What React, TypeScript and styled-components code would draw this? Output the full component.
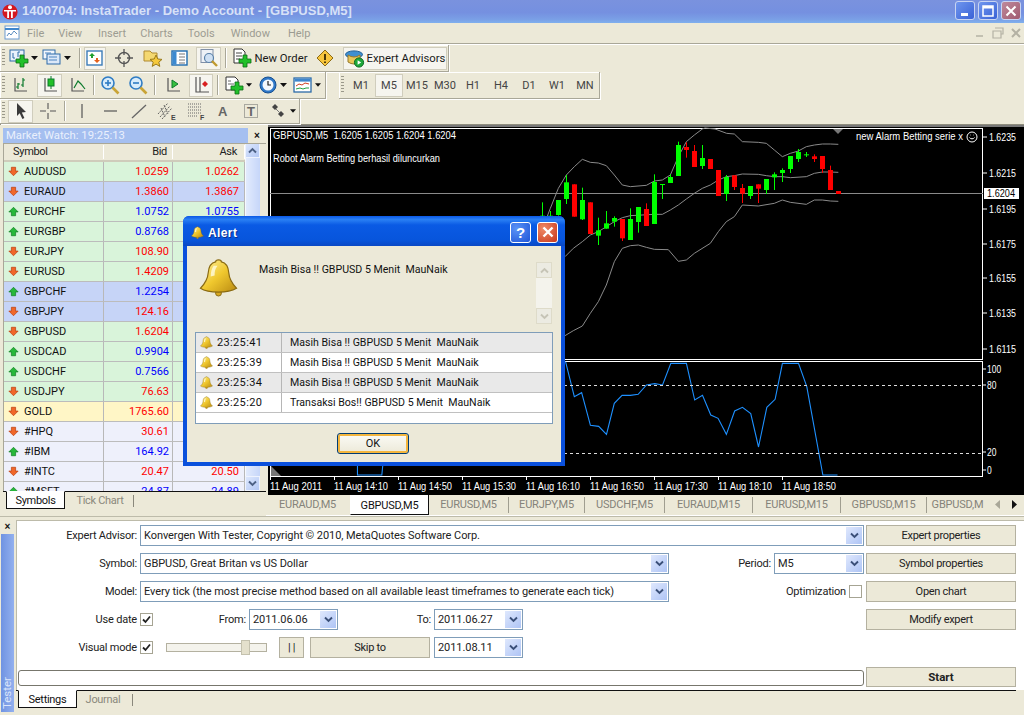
import React from "react";
import styled, { createGlobalStyle } from "styled-components";

const FONT = `Roboto, "Liberation Sans", Arial, sans-serif`;
const HEAD = `"Liberation Sans", Arial, sans-serif`;

const Global = createGlobalStyle`
  html, body { margin: 0; padding: 0; background: #ece9d8; overflow: hidden; }
  #root { width: 1024px; height: 715px; }
`;

const Window = styled.div`
  position: relative; width: 1024px; height: 715px; overflow: hidden;
  display: flex; flex-direction: column; background: #ece9d8;
  font: 11px ${FONT}; color: #222;
`;

/* ---------- title + menu ---------- */
const TitleBar = styled.div`
  height: 23px; flex: none; display: flex; align-items: center; padding: 0 3px 0 2px;
  background: linear-gradient(180deg, #7a92de 0%, #7590e0 55%, #7aa0e6 85%, #7fb0ee 100%);
`;
const TitleText = styled.div`
  flex: 1; font: bold 13px ${HEAD}; color: #d6e1f7; white-space: nowrap; margin: -2px 0 0 4px; letter-spacing: .02px;
`;
const CaptionBtn = styled.div<{ $bg: string }>`
  width: 20px; height: 19px; border-radius: 3px; border: 1px solid #c8d4f2; background: ${p => p.$bg};
  display: flex; align-items: center; justify-content: center; margin-left: 3px; margin-top: -2px; box-sizing: border-box;
`;
const MenuBar = styled.div`
  height: 20px; flex: none; display: flex; align-items: center; padding-left: 4px; color: #9c9c92;
  font-size: 11px; position: relative;
`;
const MenuItem = styled.span<{ $x: number }>`
  margin-left: ${p => p.$x}px;
`;
const MdiGroup = styled.div`
  margin-left: auto; display: flex; align-items: center; gap: 4px; padding-right: 1px;
`;

/* ---------- toolbars ---------- */
const Dock = styled.div`
  height: 82px; flex: none; border-top: 1px solid #a9a798; box-shadow: inset 0 1px 0 #fff; display: flex; flex-direction: column;
  padding-top: 1px; box-sizing: border-box; border-bottom: 1px solid #8f8d7e;
`;
const DockRow = styled.div<{ $h: number }>`
  height: ${p => p.$h}px; display: flex; flex: none;
`;
const Band = styled.div<{ $w: number; $ml?: number }>`
  width: ${p => p.$w}px; margin-left: ${p => p.$ml ?? 0}px; box-sizing: border-box; height: 100%;
  display: flex; align-items: center; border-right: 1px solid #a9a798; border-bottom: 1px solid #a9a798;
  box-shadow: 1px 1px 0 #fff, inset 1px 1px 0 #fff;
`;
const Grip = styled.div`
  width: 3px; height: 18px; margin: 0 3px 0 2px; flex: none;
  background: repeating-linear-gradient(180deg, #9a988a 0 1px, transparent 1px 3px);
`;
const Tool = styled.div<{ $w: number; $ml?: number; $on?: boolean }>`
  width: ${p => p.$w}px; height: 23px; margin-left: ${p => p.$ml ?? 0}px; flex: none; box-sizing: border-box;
  display: flex; align-items: center; justify-content: center; gap: 2px; white-space: nowrap;
  font-size: 11.3px; color: #1a1a1a;
  background: ${p => (p.$on ? "#f6f5ef" : "transparent")};
  border: 1px solid ${p => (p.$on ? "#d0cdbd" : "transparent")};
`;
const ToolSep = styled.div<{ $ml: number; $mr: number }>`
  width: 1px; height: 20px; background: #a9a798; box-shadow: 1px 0 0 #fff; margin: 0 ${p => p.$mr}px 0 ${p => p.$ml}px; flex: none;
`;
const Period = styled.div<{ $on?: boolean }>`
  width: 28px; height: 23px; box-sizing: border-box; display: flex; align-items: center; justify-content: center; flex: none;
  color: #444; font-size: 11px;
  background: ${p => (p.$on ? "#f6f5ef" : "transparent")};
  border: 1px solid ${p => (p.$on ? "#d0cdbd" : "transparent")};
`;
const Drop = () => (
  <svg width="7" height="4" viewBox="0 0 7 4"><path d="M0 0h7L3.5 4z" fill="#111" /></svg>
);

/* icons */
const Plus = ({ x = 7, y = 7, s = 1 }: { x?: number; y?: number; s?: number }) => (
  <path transform={`translate(${x} ${y}) scale(${s})`} d="M4 0h4v4h4v4H8v4H4V8H0V4h4z" fill="#22c02a" stroke="#0d6b14" strokeWidth=".8" />
);
const Ico = styled.svg<{ $w?: number }>`
  width: ${p => p.$w ?? 20}px; height: 20px; flex: none;
`;
const NewChartIcon = () => (
  <Ico viewBox="0 0 20 20">
    <rect x="1" y="2" width="14" height="11" fill="#e9f1fb" stroke="#2c6aa8" />
    <path d="M4 5v5M4 10h2M9 4v5M9 4h2" stroke="#2c6aa8" fill="none" />
    <Plus />
  </Ico>
);
const ProfileIcon = () => (
  <Ico viewBox="0 0 20 20">
    <rect x="1" y="2" width="12" height="9" fill="#f2f6fc" stroke="#2c6aa8" />
    <rect x="5" y="6" width="13" height="10" fill="#dce8f8" stroke="#2c6aa8" />
    <path d="M7 9h8M7 12h8M3 5h6" stroke="#4c84c0" />
  </Ico>
);
const WatchIcon = () => (
  <Ico viewBox="0 0 20 20">
    <rect x="2" y="3" width="15" height="14" fill="#fff" stroke="#3c7cb8" strokeWidth="1.4" />
    <path d="M7 5l3 3H8v2H6V8H4z" fill="#20a030" /><path d="M12 15l3-3h-2v-2h-2v2H9z" fill="#e4601c" />
  </Ico>
);
const CrossCircleIcon = () => (
  <Ico viewBox="0 0 20 20">
    <circle cx="10" cy="10" r="5.5" fill="none" stroke="#555" strokeWidth="1.4" />
    <path d="M10 1v6M10 13v6M1 10h6M13 10h6" stroke="#555" strokeWidth="1.3" />
  </Ico>
);
const FolderStarIcon = () => (
  <Ico viewBox="0 0 20 20">
    <path d="M1 3h6l2 2h5v8H1z" fill="#f4d870" stroke="#b08a30" />
    <path d="M13 7l1.8 4 4.2.4-3.2 2.8 1 4.2-3.8-2.3-3.8 2.3 1-4.2L7 11.4l4.2-.4z" fill="#f6c93a" stroke="#9a7a1a" />
  </Ico>
);
const NavigatorIcon = () => (
  <Ico viewBox="0 0 20 20">
    <rect x="2" y="3" width="15" height="14" fill="#fff" stroke="#1f6bb0" strokeWidth="1.4" />
    <rect x="2.5" y="3.5" width="4" height="13" fill="#3c8ad0" />
    <path d="M9 6h6M9 9h6M9 12h6M9 15h6" stroke="#777" />
  </Ico>
);
const TesterIcon = () => (
  <Ico viewBox="0 0 20 20">
    <rect x="2" y="1.5" width="12" height="13" fill="#eef1f6" stroke="#8090a8" />
    <circle cx="10" cy="10" r="4.5" fill="#cfe0f3" stroke="#5a80a8" strokeWidth="1.2" />
    <path d="M13 13l5 5" stroke="#c09a30" strokeWidth="2.4" />
  </Ico>
);
const OrderIcon = () => (
  <Ico viewBox="0 0 20 20">
    <path d="M2 1h8l3 3v11H2z" fill="#fff" stroke="#333" />
    <path d="M4 5h6M4 8h6M4 11h4" stroke="#444" />
    <Plus x={7} y={7} />
  </Ico>
);
const AlertDiamondIcon = () => (
  <Ico viewBox="0 0 20 20">
    <path d="M10 2l8 8-8 8-8-8z" fill="#f7c53c" stroke="#8c6a12" />
    <path d="M10 6v6M10 13.5v1.6" stroke="#3a2a00" strokeWidth="1.8" />
  </Ico>
);
const EAIcon = () => (
  <Ico viewBox="0 0 20 20">
    <ellipse cx="9" cy="6.5" rx="8.5" ry="3.6" fill="#3f8fd0" stroke="#1f5f98" />
    <path d="M3 7q6 4 12 0v7q-6 4-12 0z" fill="#e8c65a" stroke="#97792a" />
    <circle cx="14" cy="14.5" r="4.6" fill="#1ea83a" stroke="#0c6a22" />
    <path d="M12.6 12.2l3.6 2.3-3.6 2.3z" fill="#fff" />
  </Ico>
);
const AxisPath = "M5 3v13h12";
const BarsIcon = () => (
  <Ico viewBox="0 0 20 20"><path d={AxisPath} fill="none" stroke="#555" strokeWidth="1.2" /><path d="M8 8v6M6 12h2M8 9h2M13 3v9M11 10h2M13 5h2" stroke="#0c7a2c" fill="none" strokeWidth="1.2" /></Ico>
);
const CandlesIcon = () => (
  <Ico viewBox="0 0 20 20"><path d={AxisPath} fill="none" stroke="#555" strokeWidth="1.2" /><path d="M11 1v13" stroke="#0c7a2c" /><rect x="8" y="4" width="6" height="7" fill="#22c02a" stroke="#0c7a2c" /></Ico>
);
const LineChartIcon = () => (
  <Ico viewBox="0 0 20 20"><path d={AxisPath} fill="none" stroke="#555" strokeWidth="1.2" /><path d="M7 13l4-7 3 3 4 5" fill="none" stroke="#0c7a2c" strokeWidth="1.2" /></Ico>
);
const ZoomIcon = ({ plus }: { plus?: boolean }) => (
  <Ico viewBox="0 0 20 20">
    <circle cx="8" cy="8" r="6" fill="#d8ecfb" stroke="#2f7cc4" strokeWidth="1.6" />
    <path d="M5 8h6" stroke="#2f7cc4" strokeWidth="1.6" />
    {plus && <path d="M8 5v6" stroke="#2f7cc4" strokeWidth="1.6" />}
    <path d="M12.5 12.5l6 6" stroke="#c9a437" strokeWidth="2.6" />
  </Ico>
);
const ScrollIcon = () => (
  <Ico viewBox="0 0 20 20"><path d={AxisPath} fill="none" stroke="#555" strokeWidth="1.2" /><path d="M9 5l6 4-6 4z" fill="#38c040" stroke="#0c7a2c" /></Ico>
);
const ShiftIcon = () => (
  <Ico viewBox="0 0 20 20"><path d="M5 2v15h13M9 2v15" fill="none" stroke="#555" strokeWidth="1.2" /><path d="M14 6l3 3-3 3-3-3z" fill="#d82020" /></Ico>
);
const IndicatorIcon = () => (
  <Ico viewBox="0 0 20 20">
    <path d="M2 2h9l3 3v10H2z" fill="#fff" stroke="#333" />
    <path d="M4 6h3M4 9h6" stroke="#666" />
    <Plus x={7} y={7} />
  </Ico>
);
const ClockIcon = () => (
  <Ico viewBox="0 0 20 20">
    <circle cx="10" cy="10" r="8" fill="#2f78c8" stroke="#174f90" />
    <circle cx="10" cy="10" r="5.5" fill="#f4f8fd" />
    <path d="M10 6v4h3" fill="none" stroke="#222" strokeWidth="1.2" />
  </Ico>
);
const TemplateIcon = () => (
  <Ico viewBox="0 0 20 20">
    <rect x="1" y="3" width="17" height="14" fill="#fff" stroke="#2c6aa8" strokeWidth="1.3" />
    <rect x="1.6" y="3.6" width="16" height="3" fill="#3f86cc" />
    <path d="M3 11l3-2 3 1 3-2 4 1" fill="none" stroke="#d04020" />
    <path d="M3 14l4-1 3 1 3-1 3 0" fill="none" stroke="#20a040" />
  </Ico>
);
const CursorIcon = () => (
  <Ico viewBox="0 0 20 20"><path d="M6 2l9 9-4.2.4 2.6 5.6-2 1-2.7-5.7L6 15z" fill="#3a3a3a" /></Ico>
);
const PlainCrossIcon = () => (
  <Ico viewBox="0 0 20 20"><path d="M10 2v6M10 12v6M2 10h6M12 10h6" stroke="#555" strokeWidth="1.1" /></Ico>
);
const VLineIcon = () => <Ico viewBox="0 0 20 20"><path d="M10 3v14" stroke="#555" strokeWidth="1.2" /></Ico>;
const HLineIcon = () => <Ico viewBox="0 0 20 20"><path d="M3 10h13" stroke="#555" strokeWidth="1.2" /></Ico>;
const TrendIcon = () => <Ico viewBox="0 0 20 20"><path d="M3 17L17 4" stroke="#666" strokeWidth="1.3" /></Ico>;
const IconLetter = styled.text`
  font: bold 7px ${HEAD}; fill: #444;
`;
const ChannelIcon = () => (
  <Ico viewBox="0 0 20 20"><path d="M1 13L11 2M3 16L13 5M5 18L15 7M4 7l4 9M7 4l4 9" stroke="#555" strokeWidth=".9" strokeDasharray="2 1" /><IconLetter x="14" y="19">E</IconLetter></Ico>
);
const FiboIcon = () => (
  <Ico viewBox="0 0 20 20"><path d="M2 3h13M2 6h13M2 9h13M2 12h13M2 15h10" stroke="#666" strokeDasharray="1 1" /><IconLetter x="14" y="19">F</IconLetter></Ico>
);
const LetterA = styled.text`
  font: bold 13px ${HEAD}; fill: #666;
`;
const LetterIcon = () => <Ico viewBox="0 0 20 20"><LetterA x="5" y="15">A</LetterA></Ico>;
const TextBoxIcon = () => (
  <Ico viewBox="0 0 20 20"><rect x="3.5" y="3.5" width="13" height="13" fill="none" stroke="#666" strokeDasharray="1 1" /><LetterA x="6" y="15">T</LetterA></Ico>
);
const ArrowsIcon = () => (
  <Ico viewBox="0 0 20 20"><path d="M7 3l3 3-3 3-3-3z" fill="#444" /><path d="M13 10l3 3-3 3-3-3z" fill="#444" /><path d="M8 8l4 4" stroke="#777" /></Ico>
);
const AppLogo = () => (
  <svg width="16" height="18" viewBox="0 0 16 18">
    <circle cx="8" cy="9" r="7.6" fill="#d41820" />
    <circle cx="8" cy="4.2" r="2" fill="#fff" />
    <path d="M2 7h12v1.6h-3.2V15H9V8.6H7V15H5.200V8.600H2z" fill="#fff" />
  </svg>
);
const MenuLogo = () => (
  <svg width="16" height="18" viewBox="0 0 16 18">
    <rect x="1" y="2" width="14" height="13" fill="#fff" stroke="#6c9cd0" />
    <path d="M1 5h14" stroke="#3f86cc" strokeWidth="2" /><path d="M3 12l2-3 2 2 3-4 3 3" fill="none" stroke="#5a8dc0" />
  </svg>
);

/* ---------- workspace ---------- */
const Workspace = styled.div`
  height: 391px; flex: none; display: flex; width: 1024px;
`;
const Watch = styled.div`
  width: 266px; flex: none; display: flex; flex-direction: column; box-sizing: border-box; padding: 2px 0 5px 3px;
`;
const WatchHead = styled.div`
  height: 16px; flex: none; display: flex; align-items: center;
`;
const WatchTitle = styled.div`
  width: 245px; height: 15px; line-height: 15px; background: #a5bff0; color: #eaf0fc; padding-left: 3px; box-sizing: border-box;
  font-size: 11.3px;
`;
const PanelClose = styled.div`
  width: 18px; text-align: center; font: bold 10px ${HEAD}; color: #111;
`;
const WatchBody = styled.div`
  flex: 1; display: flex; min-height: 0; overflow: hidden; position: relative;
  border-left: 1px solid #a9a798; border-top: 1px solid #a9a798;
`;
const WatchList = styled.div`
  width: 241px; flex: none;
`;
const grid = "grid-template-columns: 100px 69px 72px;";
const WatchHeader = styled.div`
  display: grid; ${grid} height: 18px; box-sizing: border-box; align-items: center; border-bottom: 2px solid #cfccbb; font-size: 11px; letter-spacing: -.3px; background: #ece9d8; color: #222;
`;
const HeadCell = styled.div<{ $pr?: number }>`
  padding: 0 ${p => p.$pr ?? 0}px 0 ${p => (p.$pr ? 0 : 9)}px; text-align: ${p => (p.$pr ? "right" : "left")};
  border-right: 1px solid #fff; height: 14px; line-height: 14px;
`;
const RowTint: Record<string, string> = { g: "#d9f4da", b: "#c6d4f7", y: "#fff6c6", l: "#eef0fb" };
const WatchRow = styled.div<{ $t: string }>`
  display: grid; ${grid} height: 20px; box-sizing: border-box; background: ${p => RowTint[p.$t]}; border-bottom: 1px solid #bcbcbc; align-items: center; font-size: 11px;
`;
const SymCell = styled.div`
  display: flex; align-items: center; gap: 5px; padding-left: 4px; height: 19px; border-right: 1px solid #b8b8b8; color: #111;
`;
const NumCell = styled.div<{ $up: boolean; $pr: number }>`
  text-align: right; padding-right: ${p => p.$pr}px; height: 19px; line-height: 19px; color: ${p => (p.$up ? "#0000ff" : "#ff0000")}; border-right: 1px solid #b8b8b8;
`;
const TickArrow = ({ up }: { up: boolean }) => (
  <svg width="11" height="11" viewBox="0 0 13 12">
    {up
      ? <path d="M6.500 1l5.500 5.500H9V11H4V6.500H1z" fill="#27b83a" stroke="#0d7a20" strokeWidth=".8" />
      : <path d="M6.500 11L1 5.500h3V1h5v4.500h3z" fill="#f0672a" stroke="#b83a0c" strokeWidth=".8" />}
  </svg>
);
const VScroll = styled.div`
  width: 15px; flex: none; display: flex; flex-direction: column; margin-top: -1px; background: #f3f5fc;
`;
const ScrollBtn = styled.div`
  height: 15px; flex: none; box-sizing: border-box; border: 1px solid #eef3fe; background: linear-gradient(135deg, #dce7fd, #b4c8f4);
  display: flex; align-items: center; justify-content: center;
`;
const ScrollThumb = styled.div`
  flex: 1; background: linear-gradient(90deg, #e2ebfd, #c6d6f9); border-left: 1px solid #f6f9ff;
`;
const Chev = ({ up, c = "#4d6185" }: { up?: boolean; c?: string }) => (
  <svg width="9" height="7" viewBox="0 0 9 7">
    <path d={up ? "M1 5.500l3.500-3.500 3.500 3.500" : "M1 1.500l3.500 3.500 3.500-3.500"} fill="none" stroke={c} strokeWidth="1.9" />
  </svg>
);
const Tabs = styled.div<{ $h: number; $pl: number }>`
  height: ${p => p.$h}px; flex: none; display: flex; align-items: flex-start; padding-left: ${p => p.$pl}px; border-top: 1px solid #111; box-sizing: border-box; position: relative; background: #ece9d8;
`;
const PanelTab = styled.div<{ $active?: boolean; $w: number; $ml?: number }>`
  width: ${p => p.$w}px; height: 18px; line-height: 17px; text-align: center; box-sizing: border-box; margin-left: ${p => p.$ml ?? 0}px; margin-top: -1px;
  font-size: 11px; letter-spacing: -.3px; color: ${p => (p.$active ? "#111" : "#8a887c")};
  background: ${p => (p.$active ? "#fff" : "transparent")};
  border: ${p => (p.$active ? "1px solid #111" : "none")}; border-top: 1px solid ${p => (p.$active ? "#fff" : "#111")};
  flex: none;
`;
const TabSep = styled.div<{ $ml: number }>`
  width: 1px; height: 12px; background: #8a887c; margin: 3px 0 0 ${p => p.$ml}px; flex: none;
`;

const ChartCol = styled.div`
  flex: 1; min-width: 0; display: flex; flex-direction: column; padding-left: 2px;
`;
const ChartPane = styled.div`
  height: 370px; flex: none; background: #000; border-top: 2px solid #777; box-sizing: border-box; overflow: hidden;
`;
const ChartSvg = styled.svg`
  display: block; width: 756px; height: 368px;
`;
const ChartText = styled.text`
  font: 11px ${HEAD}; fill: #fff;
`;
const ChartTabs = styled.div`
  height: 21px; flex: none; display: flex; align-items: flex-start; margin-left: -2px; font-size: 11px; letter-spacing: -.2px; border-bottom: 1px solid #fff; box-sizing: border-box;
`;
const ChartTab = styled.div<{ $w: number; $active?: boolean; $sep?: boolean }>`
  width: ${p => p.$w}px; flex: none; height: ${p => (p.$active ? 20 : 16)}px; line-height: ${p => (p.$active ? 21 : 16)}px; margin-top: ${p => (p.$active ? 0 : 2)}px; text-align: center; box-sizing: border-box;
  white-space: nowrap; overflow: hidden;
  color: ${p => (p.$active ? "#111" : "#85837a")};
  background: ${p => (p.$active ? "#fff" : "transparent")};
  border-right: 1px solid ${p => (p.$active ? "#111" : p.$sep ? "#a09e90" : "transparent")};
  border-bottom: ${p => (p.$active ? "1px solid #111" : "none")};
  border-left: ${p => (p.$active ? "1px solid #fff" : "none")};
`;
const TabNav = styled.div`
  margin-left: auto; display: flex; gap: 12px; align-items: center; height: 18px; padding-right: 7px;
`;

/* ---------- tester ---------- */
const Tester = styled.div`
  height: 199px; flex: none; display: flex; border-top: 1px solid #bdbbaa; box-sizing: border-box; padding: 3px 0 3px 0;
`;
const TesterSide = styled.div`
  width: 15px; flex: none; display: flex; flex-direction: column; align-items: center;
`;
const TesterClose = styled.div`
  height: 13px; flex: none; font: bold 10px ${HEAD}; color: #111; line-height: 13px;
`;
const TesterStrip = styled.div`
  flex: 1; width: 13px; background: linear-gradient(90deg, #6f93e2, #93b0ee); color: #dbe6fb; font-size: 11.5px;
  display: flex; flex-direction: column; justify-content: flex-end; align-items: center; margin-top: 1px;
`;
const StripLabel = styled.span`
  writing-mode: vertical-rl; transform: rotate(180deg); padding-top: 3px; line-height: 13px;
`;
const TesterMain = styled.div`
  flex: 1; min-width: 0; display: flex; flex-direction: column; margin-left: 1px;
`;
const Form = styled.div`
  background: #fff; flex: 1; display: flex; flex-direction: column; padding: 4px 8px 0 0; gap: 7px; border: 1px solid #bdbbaa; border-bottom: none; border-right: none; min-height: 0;
`;
const FormRow = styled.div`
  height: 21px; display: flex; align-items: center; flex: none;
`;
const FieldLabel = styled.div<{ $w?: number; $grow?: boolean }>`
  ${p => (p.$grow ? "flex: 1;" : `width: ${p.$w}px;`)} flex-shrink: 0; text-align: right; font-size: 11px; letter-spacing: -.2px; color: #222; white-space: nowrap;
  padding-right: 3px; box-sizing: border-box;
`;
const Combo = styled.div<{ $w?: number; $ml?: number }>`
  ${p => (p.$w ? `width: ${p.$w}px; flex: none;` : "flex: 1;")} margin-left: ${p => p.$ml ?? 0}px; height: 21px; box-sizing: border-box; border: 1px solid #7f9db9; background: #fff; display: flex; align-items: center;
  padding-left: 3px; font-size: 11px; letter-spacing: -.07px; color: #222; white-space: nowrap; min-width: 0;
`;
const ComboText = styled.span`
  flex: 1; overflow: hidden;
`;
const ComboBtn = styled.div`
  width: 16px; height: 17px; flex: none; margin-right: 1px; background: linear-gradient(135deg, #dfe8fd, #aec4f5); display: flex; align-items: center; justify-content: center;
`;
const ActionBtn = styled.div<{ $w: number; $ml?: number; $h?: number; $bold?: boolean }>`
  width: ${p => p.$w}px; height: ${p => p.$h ?? 21}px; flex: none; margin-left: ${p => p.$ml ?? 0}px; box-sizing: border-box; border: 1px solid #b4b1a0; background: #ece9d8;
  font-size: ${p => (p.$bold ? 11.5 : 11)}px; letter-spacing: ${p => (p.$bold ? 0 : -0.3)}px; font-weight: ${p => (p.$bold ? 700 : 400)}; color: #222; display: flex; align-items: center; justify-content: center;
`;
const Check = styled.div<{ $ml?: number }>`
  width: 13px; height: 13px; flex: none; margin-left: ${p => p.$ml ?? 0}px; box-sizing: border-box; border: 1px solid #a6a493; background: #fff; display: flex; align-items: center; justify-content: center;
`;
const Tick = () => (
  <svg width="9" height="9" viewBox="0 0 9 9"><path d="M1 4.500l2.500 2.500L8 1.500" fill="none" stroke="#222" strokeWidth="1.8" /></svg>
);
const Slider = styled.div<{ $ml: number }>`
  width: 101px; height: 9px; flex: none; margin-left: ${p => p.$ml}px; border: 1px solid #b4b1a0; box-sizing: border-box; position: relative; background: #f4f3ec;
`;
const SliderThumb = styled.div`
  position: absolute; left: 74px; top: -4px; width: 9px; height: 15px; background: #e4e0cc; border: 1px solid #c4c1ae; box-sizing: border-box;
`;
const ProgressRow = styled.div`
  display: flex; align-items: flex-start; height: 20px; flex: none; margin-top: 2px; padding-left: 1px;
`;
const Progress = styled.div`
  flex: 1; height: 16px; margin-top: 3px; box-sizing: border-box; border: 1px solid #77766c; border-radius: 3px; background: #fff;
`;
const TesterTabs = styled.div`
  height: 22px; flex: none; display: flex; align-items: flex-start; padding-left: 2px; margin-right: 8px; border-top: 1px solid #111; box-sizing: border-box;
`;

/* ---------- dialog ---------- */
const Dialog = styled.div`
  position: absolute; left: 183px; top: 216px; width: 382px; height: 250px; box-sizing: border-box; display: flex; flex-direction: column;
  background: #0a50dc; border-radius: 6px 6px 0 0; padding: 0 4px 4px;
`;
const DialogTitle = styled.div`
  height: 30px; flex: none; display: flex; align-items: center; gap: 4px; margin: 0 -4px; padding: 2px 7px 0 8px; box-sizing: border-box; border-radius: 6px 6px 0 0;
  background: linear-gradient(180deg, #0a58e6 0%, #2a80f4 12%, #0a5ae4 30%, #0755dc 80%, #0a48c4 100%);
`;
const DialogHeading = styled.span`
  flex: 1; font: bold 12px ${HEAD}; color: #fff; letter-spacing: .4px; text-shadow: 1px 1px 0 #0a2f90; padding-top: 2px;
`;
const XpBtn = styled.div<{ $kind: "help" | "close" }>`
  width: 21px; height: 21px; box-sizing: border-box; border: 1px solid #fff; border-radius: 3px; margin-left: 2px; display: flex; align-items: center; justify-content: center;
  font: bold 15px ${HEAD}; color: #fff;
  background: ${p => (p.$kind === "help" ? "radial-gradient(circle at 30% 30%, #5a93f6, #1f55d8)" : "radial-gradient(circle at 30% 30%, #ef8a66, #c8381c)")};
`;
const DialogBody = styled.div`
  flex: 1; background: #ece9d8; display: flex; flex-direction: column; padding: 12px 8px 0; min-height: 0;
`;
const MsgRow = styled.div`
  display: flex; height: 74px; flex: none; align-items: flex-start; box-sizing: border-box;
`;
const BigBell = styled.div`
  width: 64px; flex: none; padding-left: 4px; box-sizing: border-box;
`;
const MsgText = styled.div`
  flex: 1; font-size: 10.6px; color: #111; padding-top: 5px;
`;
const DisabledScroll = styled.div`
  width: 16px; height: 62px; flex: none; margin: 4px 1px 0 0; background: #f4f3ec; display: flex; flex-direction: column; justify-content: space-between;
`;
const DisabledBtn = styled.div`
  height: 16px; box-sizing: border-box; border: 1px solid #dedbc9; background: #ecebe2; display: flex; align-items: center; justify-content: center;
`;
const AlertList = styled.div`
  height: 92px; flex: none; border: 1px solid #7f9db9; background: #fff; box-sizing: border-box;
`;
const AlertRow = styled.div<{ $alt: boolean }>`
  height: 20px; box-sizing: border-box; display: flex; align-items: center; border-bottom: 1px solid #c0c0c0; background: ${p => (p.$alt ? "#e9e9e9" : "#fff")}; font-size: 10.6px; color: #111;
`;
const TimeCell = styled.div`
  width: 86px; flex: none; display: flex; align-items: center; gap: 4px; padding-left: 4px; box-sizing: border-box; height: 19px; border-right: 1px solid #b6b6b6; letter-spacing: .35px; font-size: 11px;
`;
const MsgCell = styled.div`
  padding-left: 8px;
`;
const DialogFoot = styled.div`
  display: flex; justify-content: center; padding: 9px 2px 0 0;
`;
const OkBtn = styled.div`
  width: 72px; height: 21px; box-sizing: border-box; border: 1px solid #003c74; border-radius: 3px; background: linear-gradient(180deg, #fbfbf6, #ece9d8); color: #111; font-size: 11px;
  display: flex; align-items: center; justify-content: center; box-shadow: inset 0 0 0 2px #f4b63e;
`;
const Bell = ({ size }: { size: number }) => (
  <svg width={size} height={size} viewBox="0 0 40 40">
    <defs>
      <linearGradient id="bellg" x1="0" x2="1" y1="0" y2="1">
        <stop offset="0" stopColor="#fff4a8" /><stop offset=".5" stopColor="#f0c82e" /><stop offset="1" stopColor="#b98a12" />
      </linearGradient>
    </defs>
    <circle cx="20" cy="36" r="3" fill="#d8a820" stroke="#8a6a10" />
    <path d="M20 2c2 0 3 1 3 2 5 1 7 5 7.500 11 .5 6 2 10 8 16-5 3-12 4-18.500 4S6 34 1.500 31c6-6 7.500-10 8-16C10 9 12 5 17 4c0-1 1-2 3-2z" fill="url(#bellg)" stroke="#8a6a10" strokeWidth="1.2" />
    <path d="M15 8c-2 3-3 6-3 11l4-1c0-4 .5-7 3-10z" fill="#fffbe0" opacity=".8" />
  </svg>
);

/* ---------- chart data (zoom-space: x/3+272, y/3-2 from pane top) ---------- */
type C = [number, number, number, number, number, 0 | 1];
const candles: C[] = [
  [7, 232, 320, 272, 320, 1], [31, 258, 320, 272, 320, 1], [55, 225, 272, 225, 270, 1], [79, 150, 237, 172, 222, 1], [103, 178, 275, 178, 275, 0],
  [127, 188, 285, 225, 283, 1], [151, 232, 327, 232, 327, 0], [175, 278, 360, 316, 332, 1], [199, 258, 311, 295, 311, 1],
  [223, 274, 305, 279, 290, 1], [247, 282, 348, 282, 340, 0], [271, 250, 345, 282, 345, 1], [295, 246, 323, 246, 291, 1],
  [319, 235, 303, 252, 303, 0], [343, 148, 297, 171, 297, 1], [367, 177, 222, 177, 179, 1], [391, 148, 174, 156, 174, 1],
  [415, 50, 153, 60, 153, 1], [439, 52, 98, 66, 75, 0], [463, 60, 126, 78, 126, 0], [487, 60, 132, 99, 123, 1],
  [511, 102, 132, 102, 132, 0], [535, 135, 213, 135, 213, 0], [559, 150, 228, 156, 207, 1], [583, 150, 195, 151, 186, 0],
  [607, 177, 234, 189, 206, 0], [631, 183, 222, 183, 213, 1], [655, 178, 234, 178, 191, 0], [679, 162, 207, 162, 195, 1],
  [703, 142, 195, 148, 157, 1], [727, 130, 171, 135, 144, 1], [751, 93, 144, 93, 132, 1], [775, 72, 111, 81, 102, 1],
  [799, 81, 96, 88, 90, 1], [823, 88, 111, 94, 102, 0], [847, 93, 144, 93, 132, 0], [871, 122, 195, 135, 195, 0], [895, 198, 207, 198, 207, 0],
];
const upper = "0,330 31,250 55,190 79,150 103,125 127,103 151,112 175,114 199,122 223,150 247,180 271,185 319,181 343,168 367,165 391,150 415,95 439,50 463,30 487,12 495,9 525,12 560,25 583,27 607,50 655,52 679,55 703,75 727,95 751,85 775,78 799,65 823,60 847,57 871,57 895,58";
const middle = "60,405 75,395 100,370 127,350 151,330 175,320 199,305 223,290 247,278 271,272 343,268 367,268 391,255 415,240 439,222 463,205 487,190 511,180 535,165 559,155 583,152 607,147 655,148 679,152 703,155 727,155 751,158 799,155 823,145 847,141 871,141 895,142";
const lower = "60,640 75,632 100,617 127,603 151,565 175,530 199,480 223,410 247,370 271,362 295,360 319,367 343,373 385,374 415,409 439,405 463,385 511,355 535,320 559,290 583,275 607,240 655,243 703,235 727,225 751,232 799,238 823,225 847,225 871,228 895,229";
const toPane = (s: string) => s.split(" ").map(p => { const [x, y] = p.split(",").map(Number); return `${x / 3 + 272},${y / 3 - 2}`; }).join(" ");
const indicatorA = "627,20 645,125 660,113 678,211 695,214 711,238 727,145 743,121 760,121 776,118 793,90 810,86 826,90 843,25 875,25 892,135 908,121 925,180 940,190 957,238 974,168 990,157 1007,176 1023,276 1040,157 1057,133 1072,25 1105,25 1122,95 1155,360 1185,360";
const indicatorB = "200,330 200,360 250,360 252,330";
const toInd = (s: string) => s.split(" ").map(p => { const [x, y] = p.split(",").map(Number); return `${x / 2.052 - 8},${y / 3 + 228}`; }).join(" ");
const priceLabels: [string, number][] = [["1.6235", 14], ["1.6215", 50], ["1.6195", 86], ["1.6175", 121], ["1.6155", 155], ["1.6135", 190], ["1.6115", 226]];
const timeLabels = ["11 Aug 2011", "11 Aug 14:10", "11 Aug 14:50", "11 Aug 15:30", "11 Aug 16:10", "11 Aug 16:50", "11 Aug 17:30", "11 Aug 18:10", "11 Aug 18:50"];

const Chart = () => (
  <ChartSvg viewBox="0 0 756 368">
    <rect x="2.500" y="1.500" width="712" height="231" fill="none" stroke="#fff" />
    <rect x="2.500" y="234.500" width="712" height="115" fill="none" stroke="#fff" />
    <polyline points={toPane(upper)} fill="none" stroke="#8a8a8a" />
    <polyline points={toPane(middle)} fill="none" stroke="#8a8a8a" />
    <polyline points={toPane(lower)} fill="none" stroke="#8a8a8a" />
    <line x1="2" x2="715" y1="66.500" y2="66.500" stroke="#8a8a8a" />
    {candles.map(([x, hi, lo, a, b, g], i) => {
      const cx = Math.round(x / 3 + 272);
      const col = g ? "#00ff00" : "#ff0000";
      return (
        <g key={i}>
          <line x1={cx + 0.5} x2={cx + 0.5} y1={hi / 3 - 2} y2={lo / 3 - 2} stroke={col} />
          <rect x={cx - 2} y={a / 3 - 2} width="5" height={Math.max((b - a) / 3, 1)} fill={col} />
        </g>
      );
    })}
    <path d="M565 2h10l-5 5z" fill="#777" />
    <ChartText x="5" y="12" textLength="183" lengthAdjust="spacingAndGlyphs" xmlSpace="preserve">GBPUSD,M5  1.6205 1.6205 1.6204 1.6204</ChartText>
    <ChartText x="5" y="35" textLength="167" lengthAdjust="spacingAndGlyphs">Robot Alarm Betting berhasil diluncurkan</ChartText>
    <ChartText x="588" y="13" textLength="107" lengthAdjust="spacingAndGlyphs">new Alarm Betting serie x</ChartText>
    <circle cx="704" cy="10" r="5" fill="none" stroke="#fff" />
    <path d="M701.500 10.500a3 3 0 0 0 5 0M702.500 8h.5M705 8h.5" fill="none" stroke="#fff" />
    {priceLabels.map(([t, y]) => (
      <g key={t}>
        <line x1="715" x2="719" y1={y - 4} y2={y - 4} stroke="#fff" />
        <ChartText x="721" y={y} textLength="27" lengthAdjust="spacingAndGlyphs">{t}</ChartText>
      </g>
    ))}
    <rect x="716" y="61" width="35" height="11" fill="#fff" />
    <text x="719" y="70" fontFamily="Liberation Sans" fontSize="11" fill="#000" textLength="28" lengthAdjust="spacingAndGlyphs">1.6204</text>
    <polyline points={toInd(indicatorA)} fill="none" stroke="#1e90ff" strokeWidth="1.1" />
    <polyline points={toInd(indicatorB)} fill="none" stroke="#1e90ff" strokeWidth="1.1" />
    <line x1="2" x2="715" y1="258.500" y2="258.500" stroke="#ddd" strokeDasharray="3 3" />
    <line x1="2" x2="715" y1="326.500" y2="326.500" stroke="#ddd" strokeDasharray="3 3" />
    {([["100", 246], ["80", 262], ["20", 329], ["0", 347]] as [string, number][]).map(([t, y]) => (
      <g key={t}>
        <line x1="715" x2="718" y1={y - 4} y2={y - 4} stroke="#fff" />
        <ChartText x="719" y={y} textLength={t.length * 4.7} lengthAdjust="spacingAndGlyphs">{t}</ChartText>
      </g>
    ))}
    <path d="M3 349v-10l10 10z" fill="#777" />
    {timeLabels.map((t, i) => (
      <g key={t}>
        <line x1={2.500 + i * 64} x2={2.500 + i * 64} y1="349" y2="353" stroke="#fff" />
        <ChartText x={2 + i * 64} y="363" textLength={i === 0 ? 52 : 54} lengthAdjust="spacingAndGlyphs">{t}</ChartText>
      </g>
    ))}
  </ChartSvg>
);

const quotes: { s: string; b: string; a?: string; up: boolean; t: string }[] = [
  { s: "AUDUSD", b: "1.0259", a: "1.0262", up: false, t: "g" },
  { s: "EURAUD", b: "1.3860", a: "1.3867", up: false, t: "b" },
  { s: "EURCHF", b: "1.0752", a: "1.0755", up: true, t: "g" },
  { s: "EURGBP", b: "0.8768", up: true, t: "g" },
  { s: "EURJPY", b: "108.90", up: false, t: "g" },
  { s: "EURUSD", b: "1.4209", up: false, t: "g" },
  { s: "GBPCHF", b: "1.2254", up: true, t: "b" },
  { s: "GBPJPY", b: "124.16", up: false, t: "b" },
  { s: "GBPUSD", b: "1.6204", up: false, t: "g" },
  { s: "USDCAD", b: "0.9904", up: true, t: "g" },
  { s: "USDCHF", b: "0.7566", up: true, t: "g" },
  { s: "USDJPY", b: "76.63", up: false, t: "g" },
  { s: "GOLD", b: "1765.60", up: false, t: "y" },
  { s: "#HPQ", b: "30.61", up: false, t: "l" },
  { s: "#IBM", b: "164.92", up: true, t: "l" },
  { s: "#INTC", b: "20.47", a: "20.50", up: false, t: "l" },
  { s: "#MSFT", b: "24.87", a: "24.89", up: true, t: "l" },
];
const chartTabs: { l: string; w: number; active?: boolean; sep?: boolean }[] = [
  { l: "EURAUD,M5", w: 84 }, { l: "GBPUSD,M5", w: 79, active: true }, { l: "EURUSD,M5", w: 80, sep: true },
  { l: "EURJPY,M5", w: 76, sep: true }, { l: "USDCHF,M5", w: 80, sep: true }, { l: "EURAUD,M15", w: 88, sep: true },
  { l: "EURUSD,M15", w: 88, sep: true }, { l: "GBPUSD,M15", w: 86, sep: true }, { l: "GBPUSD,M", w: 62 },
];
const alerts = [
  ["23:25:41", "Masih Bisa !! GBPUSD 5 Menit  MauNaik"],
  ["23:25:39", "Masih Bisa !! GBPUSD 5 Menit  MauNaik"],
  ["23:25:34", "Masih Bisa !! GBPUSD 5 Menit  MauNaik"],
  ["23:25:20", "Transaksi Bos!! GBPUSD 5 Menit  MauNaik"],
];
const NoWrap = styled.span`
  white-space: pre;
`;
const ComboField = ({ text, w, ml }: { text: string; w?: number; ml?: number }) => (
  <Combo $w={w} $ml={ml}><ComboText>{text}</ComboText><ComboBtn><Chev c="#3a4f78" /></ComboBtn></Combo>
);

export default function App() {
  return (
    <Window>
      <Global />
      <TitleBar>
        <AppLogo />
        <TitleText>1400704: InstaTrader - Demo Account - [GBPUSD,M5]</TitleText>
        <CaptionBtn $bg="linear-gradient(135deg,#6f96ee,#3a62d6)"><svg width="12" height="12"><rect x="2" y="8" width="7" height="3" fill="#fff" /></svg></CaptionBtn>
        <CaptionBtn $bg="linear-gradient(135deg,#6f96ee,#3a62d6)"><svg width="12" height="12"><rect x="1" y="1" width="10" height="10" fill="none" stroke="#fff" strokeWidth="1.500" /><rect x="1" y="1" width="10" height="2.500" fill="#fff" /></svg></CaptionBtn>
        <CaptionBtn $bg="linear-gradient(135deg,#bf8a9c,#a05a70)"><svg width="12" height="12"><path d="M1.500 1.500l9 9M10.500 1.500l-9 9" stroke="#fff" strokeWidth="2" /></svg></CaptionBtn>
      </TitleBar>
      <MenuBar>
        <MenuLogo />
        <MenuItem $x={7}>File</MenuItem><MenuItem $x={14}>View</MenuItem><MenuItem $x={16}>Insert</MenuItem>
        <MenuItem $x={14}>Charts</MenuItem><MenuItem $x={15}>Tools</MenuItem><MenuItem $x={16}>Window</MenuItem><MenuItem $x={18}>Help</MenuItem>
        <MdiGroup>
          <svg width="14" height="12"><path d="M3 9h7" stroke="#b4b2a4" strokeWidth="1.500" /></svg>
          <svg width="14" height="12"><path d="M4 1h8v6h-2M2 4h8v7H2z" fill="none" stroke="#b4b2a4" strokeWidth="1.200" /></svg>
          <svg width="14" height="12"><path d="M3 2l8 8M11 2l-8 8" stroke="#b4b2a4" strokeWidth="2" /></svg>
        </MdiGroup>
      </MenuBar>
      <Dock>
        <DockRow $h={27}>
          <Band $w={449}>
            <Grip />
            <Tool $w={31}><NewChartIcon /><Drop /></Tool>
            <Tool $w={35}><ProfileIcon /><Drop /></Tool>
            <ToolSep $ml={5} $mr={4} />
            <Tool $w={22} $on><WatchIcon /></Tool>
            <Tool $w={28} $ml={4}><CrossCircleIcon /></Tool>
            <Tool $w={28} $ml={1}><FolderStarIcon /></Tool>
            <Tool $w={26}><NavigatorIcon /></Tool>
            <Tool $w={25} $ml={3} $on><TesterIcon /></Tool>
            <ToolSep $ml={4} $mr={3} />
            <Tool $w={82}><OrderIcon /><span>New Order</span></Tool>
            <Tool $w={24} $ml={2}><AlertDiamondIcon /></Tool>
            <Tool $w={104} $ml={6} $on><EAIcon /><span>Expert Advisors</span></Tool>
          </Band>
        </DockRow>
        <DockRow $h={27}>
          <Band $w={326}>
            <Grip />
            <Tool $w={24}><BarsIcon /></Tool>
            <Tool $w={25} $ml={5} $on><CandlesIcon /></Tool>
            <Tool $w={24} $ml={3}><LineChartIcon /></Tool>
            <ToolSep $ml={4} $mr={4} />
            <Tool $w={24}><ZoomIcon plus /></Tool>
            <Tool $w={24} $ml={4}><ZoomIcon /></Tool>
            <ToolSep $ml={4} $mr={4} />
            <Tool $w={24} $ml={2}><ScrollIcon /></Tool>
            <Tool $w={24} $ml={4} $on><ShiftIcon /></Tool>
            <ToolSep $ml={4} $mr={4} />
            <Tool $w={30} $ml={1}><IndicatorIcon /><Drop /></Tool>
            <Tool $w={32} $ml={3}><ClockIcon /><Drop /></Tool>
            <Tool $w={30} $ml={4}><TemplateIcon /><Drop /></Tool>
          </Band>
          <Band $w={261} $ml={13}>
            <Grip />
            {["M1", "M5", "M15", "M30", "H1", "H4", "D1", "W1", "MN"].map(p => <Period key={p} $on={p === "M5"}>{p}</Period>)}
          </Band>
        </DockRow>
        <DockRow $h={25}>
          <Band $w={300}>
            <Grip />
            <Tool $w={25} $on><CursorIcon /></Tool>
            <Tool $w={24} $ml={3}><PlainCrossIcon /></Tool>
            <ToolSep $ml={4} $mr={4} />
            <Tool $w={24} $ml={1}><VLineIcon /></Tool>
            <Tool $w={24} $ml={5}><HLineIcon /></Tool>
            <Tool $w={24} $ml={4}><TrendIcon /></Tool>
            <Tool $w={24} $ml={4}><ChannelIcon /></Tool>
            <Tool $w={24} $ml={5}><FiboIcon /></Tool>
            <Tool $w={24} $ml={3}><LetterIcon /></Tool>
            <Tool $w={24} $ml={4}><TextBoxIcon /></Tool>
            <Tool $w={30} $ml={4}><ArrowsIcon /><Drop /></Tool>
          </Band>
        </DockRow>
      </Dock>
      <Workspace>
        <Watch>
          <WatchHead>
            <WatchTitle>Market Watch: 19:25:13</WatchTitle>
            <PanelClose>×</PanelClose>
          </WatchHead>
          <WatchBody>
            <WatchList>
              <WatchHeader>
                <HeadCell>Symbol</HeadCell><HeadCell $pr={5}>Bid</HeadCell><HeadCell $pr={7}>Ask</HeadCell>
              </WatchHeader>
              {quotes.map(q => (
                <WatchRow key={q.s} $t={q.t}>
                  <SymCell><TickArrow up={q.up} />{q.s}</SymCell>
                  <NumCell $up={q.up} $pr={3}>{q.b}</NumCell>
                  <NumCell $up={q.up} $pr={5}>{q.a ?? ""}</NumCell>
                </WatchRow>
              ))}
            </WatchList>
            <VScroll>
              <ScrollBtn><Chev up /></ScrollBtn>
              <ScrollThumb />
              <ScrollBtn><Chev /></ScrollBtn>
            </VScroll>
          </WatchBody>
          <Tabs $h={20} $pl={3}>
            <PanelTab $active $w={59}>Symbols</PanelTab>
            <PanelTab $w={58} $ml={6}>Tick Chart</PanelTab>
            <TabSep $ml={4} />
          </Tabs>
        </Watch>
        <ChartCol>
          <ChartPane><Chart /></ChartPane>
          <ChartTabs>
            {chartTabs.map(t => <ChartTab key={t.l} $w={t.w} $active={t.active} $sep={t.sep}>{t.l}</ChartTab>)}
            <TabNav>
              <svg width="5" height="9"><path d="M5 0v9L0 4.500z" fill="#a9a798" /></svg>
              <svg width="5" height="9"><path d="M0 0v9l5-4.500z" fill="#111" /></svg>
            </TabNav>
          </ChartTabs>
        </ChartCol>
      </Workspace>
      <Tester>
        <TesterSide>
          <TesterClose>×</TesterClose>
          <TesterStrip><StripLabel>Tester</StripLabel></TesterStrip>
        </TesterSide>
        <TesterMain>
          <Form>
            <FormRow>
              <FieldLabel $w={123}>Expert Advisor:</FieldLabel>
              <ComboField text="Konvergen With Tester, Copyright © 2010, MetaQuotes Software Corp." />
              <ActionBtn $w={150} $ml={2}>Expert properties</ActionBtn>
            </FormRow>
            <FormRow>
              <FieldLabel $w={123}>Symbol:</FieldLabel>
              <ComboField text="GBPUSD, Great Britan vs US Dollar" w={529} />
              <FieldLabel $grow>Period:</FieldLabel>
              <ComboField text="M5" w={90} />
              <ActionBtn $w={150} $ml={2}>Symbol properties</ActionBtn>
            </FormRow>
            <FormRow>
              <FieldLabel $w={123}>Model:</FieldLabel>
              <ComboField text="Every tick (the most precise method based on all available least timeframes to generate each tick)" w={529} />
              <FieldLabel $grow>Optimization</FieldLabel>
              <Check />
              <ActionBtn $w={150} $ml={4}>Open chart</ActionBtn>
            </FormRow>
            <FormRow>
              <FieldLabel $w={123}>Use date</FieldLabel>
              <Check><Tick /></Check>
              <FieldLabel $w={96}>From:</FieldLabel>
              <ComboField text="2011.06.06" w={89} />
              <FieldLabel $w={96}>To:</FieldLabel>
              <ComboField text="2011.06.27" w={89} />
              <ActionBtn $w={150} $ml={343}>Modify expert</ActionBtn>
            </FormRow>
            <FormRow>
              <FieldLabel $w={123}>Visual mode</FieldLabel>
              <Check><Tick /></Check>
              <Slider $ml={13}><SliderThumb /></Slider>
              <ActionBtn $w={25} $ml={12}>| |</ActionBtn>
              <ActionBtn $w={120} $ml={6}>Skip to</ActionBtn>
              <ComboField text="2011.08.11" w={89} ml={4} />
            </FormRow>
            <ProgressRow>
              <Progress />
              <ActionBtn $w={150} $ml={2} $h={20} $bold>Start</ActionBtn>
            </ProgressRow>
          </Form>
          <TesterTabs>
            <PanelTab $active $w={59}>Settings</PanelTab>
            <PanelTab $w={44} $ml={4}>Journal</PanelTab>
            <TabSep $ml={7} />
          </TesterTabs>
        </TesterMain>
      </Tester>
      <Dialog>
        <DialogTitle>
          <Bell size={13} />
          <DialogHeading>Alert</DialogHeading>
          <XpBtn $kind="help">?</XpBtn>
          <XpBtn $kind="close"><svg width="14" height="14"><path d="M2.500 2.500l9 9M11.500 2.500l-9 9" stroke="#fff" strokeWidth="2.400" /></svg></XpBtn>
        </DialogTitle>
        <DialogBody>
          <MsgRow>
            <BigBell><Bell size={39} /></BigBell>
            <MsgText><NoWrap>Masih Bisa !! GBPUSD 5 Menit  MauNaik</NoWrap></MsgText>
            <DisabledScroll>
              <DisabledBtn><Chev up c="#c6c4b6" /></DisabledBtn>
              <DisabledBtn><Chev c="#c6c4b6" /></DisabledBtn>
            </DisabledScroll>
          </MsgRow>
          <AlertList>
            {alerts.map(([t, m], i) => (
              <AlertRow key={t} $alt={i % 2 === 0}>
                <TimeCell><Bell size={13} />{t}</TimeCell>
                <MsgCell><NoWrap>{m}</NoWrap></MsgCell>
              </AlertRow>
            ))}
          </AlertList>
          <DialogFoot><OkBtn>OK</OkBtn></DialogFoot>
        </DialogBody>
      </Dialog>
    </Window>
  );
}
